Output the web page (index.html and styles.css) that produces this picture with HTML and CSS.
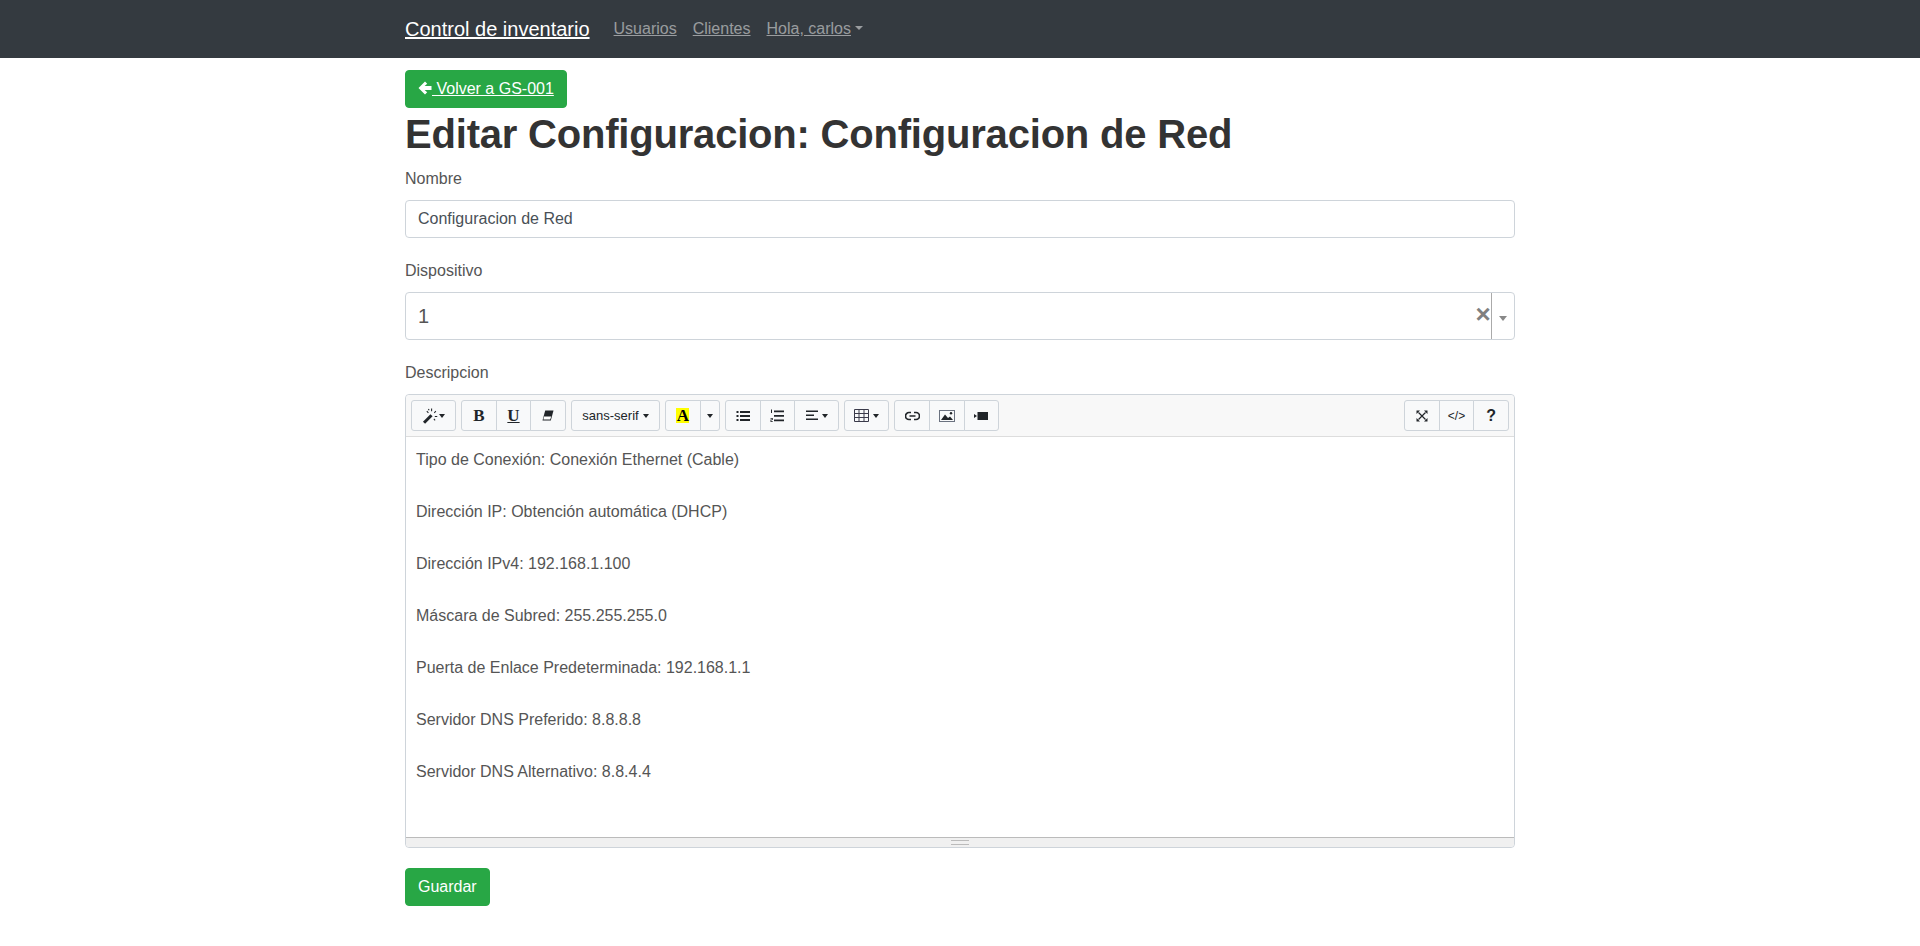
FILE: index.html
```html
<!DOCTYPE html>
<html lang="es">
<head>
    <meta charset="UTF-8">
    <meta name="viewport" content="width=device-width, initial-scale=1.0">
    <title>Editar Configuracion</title>
    <link rel="stylesheet" href="styles.css">
</head>
<body>

<nav class="navbar">
    <div class="container nav-inner">
        <a class="brand" href="#">Control de inventario</a>
        <a class="nav-link" href="#">Usuarios</a>
        <a class="nav-link" href="#">Clientes</a>
        <a class="nav-link" href="#">Hola, carlos</a><span class="caret caret-nav"></span>
    </div>
</nav>

<div class="container">
    <a class="btn btn-back" href="#">
        <svg class="back-arrow" viewBox="0 0 14 14"><path d="M7 0.5 L9.2 2.7 L6.6 5 H13.5 V9 H6.6 L9.2 11.3 L7 13.5 L0.5 7 Z" fill="#fff"/></svg> Volver a GS-001
    </a>
    <h1>Editar Configuracion: Configuracion de Red</h1>

    <form>
        <div class="form-group">
            <label>Nombre</label>
            <input class="form-control" type="text" value="Configuracion de Red">
        </div>

        <div class="form-group">
            <label>Dispositivo</label>
            <div class="select-box">
                <span class="select-value">1</span>
                <span class="select-clear">×</span>
                <span class="select-arrow"><span class="arrow-down"></span></span>
            </div>
        </div>

        <div class="form-group">
            <label>Descripcion</label>
            <div class="editor">
                <div class="toolbar">
                    <div class="btn-group">
                        <button type="button" class="tool tool-wand">
                            <svg width="16" height="16" viewBox="0 0 14 15"><path d="M0.4 12.8 L7.4 5.8 L9.4 7.8 L2.4 14.8 Z" fill="#212529"/><path d="M8.5 0.5 V3 M12.5 3 L11 4.5 M13.8 8 H11.5 M4 3 L5.5 4.5 M11.8 11.5 L10.6 10.3 M5.5 1 L6.2 2.2" stroke="#212529" stroke-width="1" fill="none"/></svg><span class="caret caret-tight"></span>
                        </button>
                    </div>
                    <div class="btn-group">
                        <button type="button" class="tool"><b class="serif-icon">B</b></button>
                        <button type="button" class="tool"><span class="serif-icon underline">U</span></button>
                        <button type="button" class="tool">
                            <svg width="12" height="11" viewBox="0 0 12 11"><path d="M3.2 0.5 H11.5 L8.8 10.5 H0.5 Z" fill="#212529"/><path d="M2 6.6 H9.2 L8.2 9.5 H1.4 Z" fill="#fff"/></svg>
                        </button>
                    </div>
                    <div class="btn-group">
                        <button type="button" class="tool tool-font">sans-serif<span class="caret"></span></button>
                    </div>
                    <div class="btn-group">
                        <button type="button" class="tool tool-color"><b class="serif-icon color-a">A</b></button>
                        <button type="button" class="tool tool-color-arrow"><span class="caret caret-solo"></span></button>
                    </div>
                    <div class="btn-group">
                        <button type="button" class="tool">
                            <svg width="14" height="12" viewBox="0 0 14 12"><path d="M0.5 1 H2.5 V3 H0.5 Z M0.5 5 H2.5 V7 H0.5 Z M0.5 9 H2.5 V11 H0.5 Z M4 1 H14 V3 H4 Z M4 5 H14 V7 H4 Z M4 9 H14 V11 H4 Z" fill="#212529"/></svg>
                        </button>
                        <button type="button" class="tool">
                            <svg width="14" height="14" viewBox="0 0 14 14"><path d="M4 1.5 H14 V3.2 H4 Z M4 6 H14 V7.7 H4 Z M4 10.5 H14 V12.2 H4 Z M1 0.5 H2 V4 H1 Z M0.5 9 H2.8 V11 H1.4 V12.2 H2.8 V13 H0.5 V10.4 H2 V9.8 H0.5 Z" fill="#212529"/></svg>
                        </button>
                        <button type="button" class="tool tool-align">
                            <svg width="12" height="11" viewBox="0 0 12 11"><path d="M0 0.5 H12 V2 H0 Z M0 4.5 H8 V6 H0 Z M0 8.5 H12 V10 H0 Z" fill="#212529"/></svg><span class="caret"></span>
                        </button>
                    </div>
                    <div class="btn-group">
                        <button type="button" class="tool tool-table">
                            <svg width="15" height="13" viewBox="0 0 15 13"><path d="M0.5 0.5 H14.5 V12.5 H0.5 Z M0.5 4.5 H14.5 M0.5 8.5 H14.5 M5 0.5 V12.5 M10 0.5 V12.5" stroke="#3a3a4a" stroke-width="1" fill="none"/></svg><span class="caret"></span>
                        </button>
                    </div>
                    <div class="btn-group">
                        <button type="button" class="tool">
                            <svg width="15" height="10" viewBox="0 0 15 10"><path d="M6 1.5 H4 A3.5 3.5 0 0 0 4 8.5 H6 M9 1.5 H11 A3.5 3.5 0 0 1 11 8.5 H9 M4.5 5 H10.5" stroke="#212529" stroke-width="1.7" fill="none"/></svg>
                        </button>
                        <button type="button" class="tool">
                            <svg width="16" height="12" viewBox="0 0 16 12"><rect x="0.5" y="0.5" width="15" height="11" stroke="#6b7280" fill="none"/><path d="M2 10 L6 4.5 L9 8 L11 6.5 L14 10 Z" fill="#212529"/><circle cx="12" cy="3.2" r="1.2" fill="#212529"/></svg>
                        </button>
                        <button type="button" class="tool">
                            <svg width="14" height="8" viewBox="0 0 14 8"><path d="M0 2 L3 4 L0 6 Z" fill="#212529"/><rect x="3.5" y="0" width="10.5" height="8" fill="#212529"/></svg>
                        </button>
                    </div>
                    <div class="btn-group toolbar-right">
                        <button type="button" class="tool">
                            <svg width="12" height="12" viewBox="0 0 12 12"><path d="M2.5 2.5 L9.5 9.5 M9.5 2.5 L2.5 9.5" stroke="#212529" stroke-width="1.2"/><path d="M0.5 0.5 H4 L0.5 4 Z M11.5 0.5 H8 L11.5 4 Z M0.5 11.5 H4 L0.5 8 Z M11.5 11.5 H8 L11.5 8 Z" fill="#212529"/></svg>
                        </button>
                        <button type="button" class="tool tool-code">&lt;/&gt;</button>
                        <button type="button" class="tool tool-help">?</button>
                    </div>
                </div>
                <div class="editable">
                    <p>Tipo de Conexión: Conexión Ethernet (Cable)</p>
                    <p>Dirección IP: Obtención automática (DHCP)</p>
                    <p>Dirección IPv4: 192.168.1.100</p>
                    <p>Máscara de Subred: 255.255.255.0</p>
                    <p>Puerta de Enlace Predeterminada: 192.168.1.1</p>
                    <p>Servidor DNS Preferido: 8.8.8.8</p>
                    <p>Servidor DNS Alternativo: 8.8.4.4</p>
                </div>
                <div class="statusbar"><span class="grip"></span></div>
            </div>
        </div>

        <button type="button" class="btn">Guardar</button>
    </form>
</div>

</body>
</html>
```

FILE: styles.css
```css
body {
    margin: 0;
    font-family: "Liberation Sans", Arial, sans-serif;
    font-size: 16px;
    line-height: 1.5;
    color: #555;
    background-color: #fff;
}
.container {
    width: 1110px;
    margin: 0 auto;
}
.navbar {
    background-color: #343a40;
    height: 58px;
}
.nav-inner {
    display: flex;
    align-items: center;
    height: 58px;
}
.brand {
    font-size: 20px;
    color: #fff;
    margin-right: 24px;
}
.nav-link {
    color: rgba(255, 255, 255, 0.5);
    margin-right: 16px;
}
.nav-link:last-of-type {
    margin-right: 0;
}
.caret {
    display: inline-block;
    width: 0;
    height: 0;
    margin-left: 4px;
    vertical-align: 2px;
    border-top: 4px solid #212529;
    border-left: 3.5px solid transparent;
    border-right: 3.5px solid transparent;
}
.caret-nav {
    margin-bottom: 2px;
    border-top: 4.8px solid rgba(255, 255, 255, 0.5);
    border-left: 4.8px solid transparent;
    border-right: 4.8px solid transparent;
}
.caret-tight {
    margin-left: 1px;
}
.btn {
    display: inline-block;
    background-color: #28a745;
    color: #fff;
    font-family: inherit;
    font-size: 16px;
    line-height: 24px;
    padding: 6px 12px;
    border: 1px solid #28a745;
    border-radius: 4px;
}
.btn-back {
    margin-top: 12px;
    vertical-align: top;
}
.back-arrow {
    width: 14px;
    height: 14px;
    vertical-align: -1px;
}
h1 {
    margin: 2px 0 8px;
    font-size: 40px;
    line-height: 48px;
    letter-spacing: -0.2px;
    font-weight: bold;
    color: #333;
}
.form-group {
    margin-bottom: 20px;
}
label {
    display: block;
    padding-top: 1px;
    margin-bottom: 9px;
}
.form-control {
    display: block;
    box-sizing: border-box;
    width: 100%;
    height: 38px;
    padding: 6px 12px;
    font-family: inherit;
    font-size: 16px;
    color: #495057;
    border: 1px solid #ced4da;
    border-radius: 4px;
}
.select-box {
    display: flex;
    align-items: stretch;
    height: 48px;
    box-sizing: border-box;
    border: 1px solid #ced4da;
    border-radius: 4px;
}
.select-value {
    flex: 1;
    padding-left: 12px;
    font-size: 20px;
    line-height: 46px;
    color: #555;
}
.select-clear {
    width: 16px;
    font-size: 26px;
    line-height: 42px;
    font-weight: bold;
    color: #808080;
    text-align: center;
}
.select-arrow {
    width: 22px;
    border-left: 1px solid #aaa;
    display: flex;
    align-items: center;
    justify-content: center;
}
.arrow-down {
    margin-top: 4px;
    border-top: 5px solid #888;
    border-left: 4px solid transparent;
    border-right: 4px solid transparent;
}
.editor {
    border: 1px solid #ced4da;
    border-radius: 4px;
}
.toolbar {
    display: flex;
    gap: 5px;
    height: 42px;
    box-sizing: border-box;
    padding: 5px 5px 0;
    background-color: #f8f8f8;
    border-bottom: 1px solid #ddd;
    border-radius: 4px 4px 0 0;
}
.btn-group {
    display: flex;
    height: 31px;
}
.toolbar-right {
    margin-left: auto;
}
.tool {
    display: flex;
    align-items: center;
    justify-content: center;
    box-sizing: border-box;
    width: 35.67px;
    height: 31px;
    margin-left: -1px;
    padding: 0;
    font-family: inherit;
    font-size: 12px;
    color: #212529;
    background-color: #f8f9fa;
    border: 1px solid #ced4da;
}
.btn-group .tool:first-child {
    margin-left: 0;
    border-radius: 3px 0 0 3px;
}
.btn-group .tool:last-child {
    border-radius: 0 3px 3px 0;
}
.btn-group .tool:only-child {
    border-radius: 3px;
}
.tool-wand {
    width: 45px;
}
.tool-font {
    width: 89px;
    font-size: 13px;
}
.tool-color {
    width: 36px;
}
.tool-color-arrow {
    width: 20px;
}
.tool-align {
    width: 45px;
}
.tool-table {
    width: 45px;
}
.caret-solo {
    margin-left: 0;
}
.serif-icon {
    font-family: "Liberation Serif", serif;
    font-size: 17px;
    font-weight: bold;
    line-height: 15px;
}
.underline {
    text-decoration: underline;
}
.color-a {
    display: block;
    width: 13px;
    height: 15px;
    background-color: #ff0;
    color: #000;
    text-align: center;
}
.tool-code {
    font-size: 12px;
}
.tool-help {
    font-size: 16px;
    font-weight: bold;
}
.editable {
    height: 400px;
    box-sizing: border-box;
    padding: 11px 10px 0;
    background-color: #fff;
}
.editable p {
    margin: 0 0 28px;
}
.statusbar {
    display: flex;
    justify-content: center;
    align-items: center;
    height: 10px;
    box-sizing: border-box;
    background-color: #f0f0f0;
    border-top: 1px solid #bbb;
    border-radius: 0 0 4px 4px;
}
.grip {
    width: 18px;
    height: 5px;
    border-top: 1px solid #bbb;
    border-bottom: 1px solid #bbb;
    box-sizing: border-box;
}
```
